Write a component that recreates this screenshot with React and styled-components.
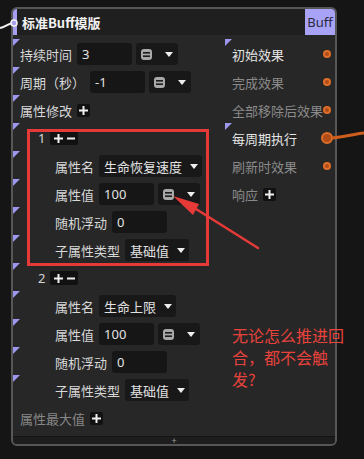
import styled, { createGlobalStyle, css } from 'styled-components';

const GlobalStyle = createGlobalStyle`
  html, body {
    margin: 0;
    padding: 0;
    background: #151515;
  }
  body {
    font-family: "Noto Sans CJK SC", "Noto Sans", sans-serif;
  }
`;

const Page = styled.div`
  position: relative;
  width: 364px;
  height: 459px;
  padding: 7px 0 0 11px;
  box-sizing: border-box;
  overflow: hidden;
`;

const Node = styled.div`
  width: 326px;
  height: 439px;
  box-sizing: border-box;
  border: 2px solid #575757;
  border-radius: 6px;
  background: #272727;
  display: flex;
  flex-direction: column;
  overflow: hidden;
`;

const TitleBar = styled.div`
  height: 26px;
  flex-shrink: 0;
  display: flex;
  align-items: center;
  background: #1f1f1f;
`;

const InPin = styled.span`
  width: 4px;
  align-self: stretch;
  background: #a59ff0;
`;

const Title = styled.span`
  flex: 1;
  margin-left: 5px;
  font-size: 13px;
  font-weight: 700;
  color: #f2f2f2;
  line-height: 1;
`;

const Badge = styled.span`
  align-self: stretch;
  width: 30px;
  display: flex;
  align-items: center;
  justify-content: center;
  background: #a9a3f7;
  color: #2a2940;
  font-family: "Noto Sans", sans-serif;
  font-size: 13px;
  line-height: 1;
`;

const Body = styled.div`
  flex: 1;
  display: grid;
  grid-template-columns: 212px 1fr;
  padding-top: 5px;
`;

const Column = styled.div`
  display: flex;
  flex-direction: column;
  min-width: 0;
`;

const marker = css`
  &::before {
    content: '';
    position: absolute;
    left: 0;
    top: -1px;
    border-top: 7px solid #9d97f0;
    border-right: 7px solid transparent;
  }
`;

const Row = styled.div`
  position: relative;
  height: 28px;
  display: flex;
  align-items: center;
  gap: 5px;
  padding-left: ${p => p.$indent || 7}px;
  ${p => p.$marker && marker}
`;

const Label = styled.span`
  font-size: 13px;
  line-height: 1;
  white-space: nowrap;
  color: ${p => (p.$dim ? '#868686' : '#d8d8d8')};
`;

const ValueBox = styled.div`
  width: 55px;
  height: 22px;
  box-sizing: border-box;
  padding-left: 5px;
  display: flex;
  align-items: center;
  background: #161616;
  border-radius: 3px;
  font-family: "Noto Sans", sans-serif;
  font-size: 13px;
  color: #e2e2e2;
`;

const ModeButton = styled.div`
  width: 42px;
  height: 22px;
  margin-left: -1px;
  box-sizing: border-box;
  padding: 0 5px;
  display: flex;
  align-items: center;
  justify-content: space-between;
  background: #181818;
  border-radius: 3px;
`;

const Select = styled.div`
  height: 22px;
  box-sizing: border-box;
  padding: 0 4px 0 5px;
  display: flex;
  align-items: center;
  gap: 8px;
  background: #181818;
  border-radius: 3px;
  font-size: 13px;
  line-height: 1;
  color: #e2e2e2;
`;

const Caret = styled.span`
  width: 0;
  height: 0;
  border-left: 4px solid transparent;
  border-right: 4px solid transparent;
  border-top: 5px solid #eeeeee;
`;

const IconBox = styled.span`
  height: ${p => p.$h || 13}px;
  width: ${p => p.$w || 13}px;
  display: inline-flex;
  align-items: center;
  justify-content: space-evenly;
  background: #111111;
  border-radius: 2px;
`;

const Number = styled.span`
  font-family: "Noto Sans", sans-serif;
  font-size: 13px;
  line-height: 1;
  color: #d6d6d6;
`;

const OutRow = styled.div`
  position: relative;
  height: 28px;
  display: flex;
  align-items: center;
  gap: 5px;
  padding: 0 0 0 7px;
  ${p => p.$marker && marker}
`;

const OutLabel = styled(Label)`
  flex: ${p => (p.$grow ? 1 : 'none')};
  min-width: 0;
  color: ${p => (p.$on ? '#e4e4e4' : '#8a8a8a')};
`;

const Dot = styled.span`
  width: ${p => (p.$big ? 12 : 8)}px;
  height: ${p => (p.$big ? 12 : 8)}px;
  margin-left: -6px;
  margin-right: ${p => (p.$big ? 2 : 4)}px;
  box-sizing: border-box;
  border-radius: 50%;
  background: #b04c18;
  border: 2px solid #de6e2a;
  flex-shrink: 0;
`;

const Footer = styled.div`
  height: 7px;
  flex-shrink: 0;
  border-top: 1px solid #141414;
  background: #1d1d1d;
  display: flex;
  align-items: center;
  justify-content: center;
  font-family: "Noto Sans", sans-serif;
  font-size: 9px;
  line-height: 1;
  color: #a0a0a0;
`;

const Overlay = styled.svg`
  position: absolute;
  left: 0;
  top: 0;
  pointer-events: none;
`;

const RedBox = styled.div`
  position: absolute;
  left: 27px;
  top: 129px;
  width: 182px;
  height: 137px;
  box-sizing: border-box;
  border: 3px solid #e53a38;
`;

const Note = styled.div`
  position: absolute;
  left: 232px;
  top: 324px;
  width: 115px;
  font-size: 16px;
  line-height: 22px;
  color: #e8423c;
`;

function Plus({ size = 9 }) {
  const t = 2;
  const o = (size - t) / 2;
  return (
    <svg width={size} height={size} viewBox={`0 0 ${size} ${size}`}>
      <rect x={o} y="0" width={t} height={size} fill="#f0f0f0" />
      <rect x="0" y={o} width={size} height={t} fill="#f0f0f0" />
    </svg>
  );
}

function Minus() {
  return (
    <svg width="8" height="9" viewBox="0 0 8 9">
      <rect x="0" y="3.5" width="8" height="2" fill="#f0f0f0" />
    </svg>
  );
}

function ModeIcon() {
  return (
    <svg width="11" height="11" viewBox="0 0 11 11">
      <rect x="0" y="0" width="11" height="11" rx="3" fill="#a9a9a9" />
      <rect x="2" y="3" width="7" height="1.6" fill="#1c1c1c" />
      <rect x="2" y="6.4" width="7" height="1.6" fill="#1c1c1c" />
    </svg>
  );
}

const Mode = () => (
  <ModeButton>
    <ModeIcon />
    <Caret />
  </ModeButton>
);

const AddBtn = () => (
  <IconBox>
    <Plus />
  </IconBox>
);

const GroupHead = ({ n }) => (
  <Row $indent={25} $marker>
    <Number>{n}</Number>
    <IconBox $w={28} $h={14}>
      <Plus />
      <Minus />
    </IconBox>
  </Row>
);

const Modifier = ({ name, marked }) => (
  <>
    <Row $indent={42} $marker={marked}>
      <Label>属性名</Label>
      <Select>
        {name}
        <Caret />
      </Select>
    </Row>
    <Row $indent={42} $marker={marked}>
      <Label>属性值</Label>
      <ValueBox>100</ValueBox>
      <Mode />
    </Row>
    <Row $indent={42} $marker={marked}>
      <Label>随机浮动</Label>
      <ValueBox>0</ValueBox>
    </Row>
    <Row $indent={42} $marker={marked}>
      <Label>子属性类型</Label>
      <Select>
        基础值
        <Caret />
      </Select>
    </Row>
  </>
);

const outputs = [
  { label: '初始效果', on: true, marker: true, dot: 'small' },
  { label: '完成效果', dot: 'small' },
  { label: '全部移除后效果', dot: 'small' },
  { label: '每周期执行', on: true, marker: true, dot: 'big' },
  { label: '刷新时效果', dot: 'small' },
  { label: '响应', add: true },
];

export default function App() {
  return (
    <>
      <GlobalStyle />
      <Page>
        <Node>
          <TitleBar>
            <InPin />
            <Title>标准Buff模版</Title>
            <Badge>Buff</Badge>
          </TitleBar>
          <Body>
            <Column>
              <Row $marker>
                <Label>持续时间</Label>
                <ValueBox>3</ValueBox>
                <Mode />
              </Row>
              <Row $marker>
                <Label>周期（秒）</Label>
                <ValueBox>-1</ValueBox>
                <Mode />
              </Row>
              <Row $marker>
                <Label>属性修改</Label>
                <AddBtn />
              </Row>
              <GroupHead n={1} />
              <Modifier name="生命恢复速度" marked />
              <GroupHead n={2} />
              <Modifier name="生命上限" marked />
              <Row>
                <Label $dim>属性最大值</Label>
                <AddBtn />
              </Row>
            </Column>
            <Column>
              {outputs.map(o => (
                <OutRow key={o.label} $marker={o.marker}>
                  <OutLabel $on={o.on} $grow={!o.add}>
                    {o.label}
                  </OutLabel>
                  {o.add && <AddBtn />}
                  {o.dot && <Dot $big={o.dot === 'big'} />}
                </OutRow>
              ))}
            </Column>
          </Body>
          <Footer>+</Footer>
        </Node>

        <Overlay width="364" height="459" viewBox="0 0 364 459">
          <path d="M0 28 C5 27 9 23 14 23" stroke="#f2f2f2" strokeWidth="2" fill="none" />
          <circle cx="14" cy="23" r="3" stroke="#f2f2f2" strokeWidth="1.6" fill="#a59ff0" />
          <path d="M332 138 C344 137 354 134 364 133" stroke="#cf5e1e" strokeWidth="3" fill="none" />
        </Overlay>

        <RedBox />
        <Overlay width="364" height="459" viewBox="0 0 364 459">
          <path d="M196 209 L258 248" stroke="#e53a38" strokeWidth="2.5" fill="none" strokeLinecap="round" />
          <polygon points="173,196 199,204 193,215" fill="#e53a38" />
        </Overlay>
        <Note>无论怎么推进回合，都不会触发?</Note>
      </Page>
    </>
  );
}
